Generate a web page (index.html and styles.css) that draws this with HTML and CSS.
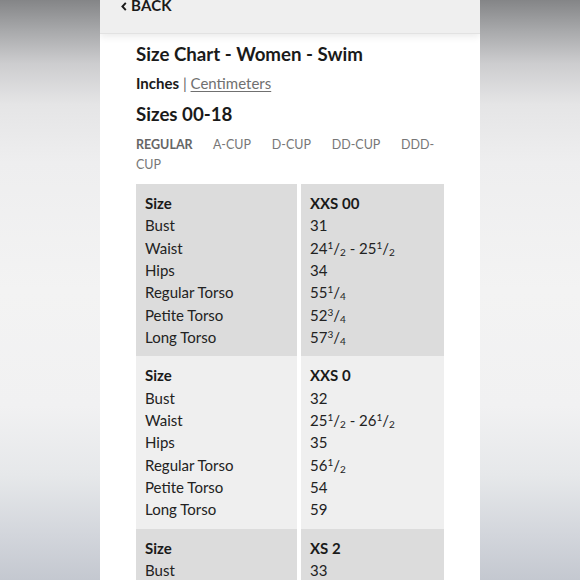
FILE: index.html
```html
<!DOCTYPE html>
<html lang="en">
<head>
<meta charset="utf-8">
<title>Size Chart - Women - Swim</title>
<link rel="stylesheet" href="styles.css">
</head>
<body>
<div class="panel">
  <header class="topbar">
    <a class="back" href="#">
      <svg class="chev" width="6" height="9" viewBox="0 0 6 9"><path d="M4.8 0.8 L1.4 4.5 L4.8 8.2" fill="none" stroke="#1a1a1a" stroke-width="1.9"/></svg>
      <span>BACK</span>
    </a>
  </header>
  <main class="content">
    <h1 class="title">Size Chart - Women - Swim</h1>
    <p class="units"><b>Inches</b> <span class="sep">|</span> <a href="#" class="cm">Centimeters</a></p>
    <h2 class="sizes">Sizes 00-18</h2>
    <p class="tabs"><span class="tab active">REGULAR</span> <span class="tab">A-CUP</span> <span class="tab">D-CUP</span> <span class="tab">DD-CUP</span> <span class="tab">DDD-CUP</span></p>
    <div class="chart">
      <div class="block dark">
        <div class="cell">
          <div class="row b">Size</div><div class="row">Bust</div><div class="row">Waist</div><div class="row">Hips</div><div class="row">Regular Torso</div><div class="row">Petite Torso</div><div class="row">Long Torso</div>
        </div>
        <div class="cell val">
          <div class="row b">XXS 00</div>
          <div class="row">31</div>
          <div class="row">24<sup>1</sup>/<sub>2</sub> - 25<sup>1</sup>/<sub>2</sub></div>
          <div class="row">34</div>
          <div class="row">55<sup>1</sup>/<sub>4</sub></div>
          <div class="row">52<sup>3</sup>/<sub>4</sub></div>
          <div class="row">57<sup>3</sup>/<sub>4</sub></div>
        </div>
      </div>
      <div class="block light">
        <div class="cell">
          <div class="row b">Size</div><div class="row">Bust</div><div class="row">Waist</div><div class="row">Hips</div><div class="row">Regular Torso</div><div class="row">Petite Torso</div><div class="row">Long Torso</div>
        </div>
        <div class="cell val">
          <div class="row b">XXS 0</div>
          <div class="row">32</div>
          <div class="row">25<sup>1</sup>/<sub>2</sub> - 26<sup>1</sup>/<sub>2</sub></div>
          <div class="row">35</div>
          <div class="row">56<sup>1</sup>/<sub>2</sub></div>
          <div class="row">54</div>
          <div class="row">59</div>
        </div>
      </div>
      <div class="block dark">
        <div class="cell">
          <div class="row b">Size</div><div class="row">Bust</div><div class="row">Waist</div><div class="row">Hips</div>
        </div>
        <div class="cell val">
          <div class="row b">XS 2</div>
          <div class="row">33</div>
          <div class="row">26<sup>1</sup>/<sub>2</sub> - 27<sup>1</sup>/<sub>2</sub></div>
          <div class="row">36</div>
        </div>
      </div>
    </div>
  </main>
</div>
</body>
</html>
```

FILE: styles.css
```css
html, body {
  margin: 0;
  padding: 0;
  height: 580px;
  overflow: hidden;
}
body {
  background: linear-gradient(to bottom, #848587 0%, #a6a7a9 5%, #cdcdcf 11%, #e5e5e6 18%, #eeeeef 28%, #f3f3f3 50%, #f1f1f2 70%, #e6e8ea 82%, #d3d6dc 92%, #c4c8d0 100%);
  display: flex;
  justify-content: center;
  font-family: Lato, "Open Sans", sans-serif;
  color: #1e1e1e;
}
.panel {
  width: 380px;
  height: 580px;
  background: #ffffff;
  overflow: hidden;
}
.topbar {
  height: 35px;
  background: #efefef;
  border-bottom: 1px solid #e2e2e2;
  box-shadow: 0 3px 7px rgba(0, 0, 0, 0.08);
  position: relative;
}
.back {
  display: flex;
  align-items: center;
  gap: 4px;
  padding-left: 21px;
  margin-top: -2px;
  font-size: 15px;
  line-height: 15px;
  font-weight: 700;
  color: #1a1a1a;
  text-decoration: none;
  letter-spacing: 0.2px;
}
.chev { display: block; margin-top: 1px; }
.content {
  padding-left: 36px;
  width: 308px;
}
.title {
  margin: 8px 0 0;
  font-size: 18.7px;
  line-height: 24px;
  font-weight: 700;
  color: #1a1a1a;
}
.units {
  margin: 6px 0 0;
  font-size: 15px;
  line-height: 22px;
  color: #1a1a1a;
}
.units b { font-weight: 700; }
.sep { color: #666; }
.cm { color: #707070; text-decoration: underline; text-underline-offset: 2px; }
.sizes {
  margin: 8px 0 0;
  font-size: 18.7px;
  line-height: 24px;
  font-weight: 700;
  color: #1a1a1a;
}
.tabs {
  margin: 9px 0 0;
  font-size: 12.5px;
  line-height: 20px;
  letter-spacing: 0;
  color: #777;
}
.tab { margin-right: 17.5px; }
.tab:last-child { margin-right: 0; }
.tab.active { font-weight: 700; color: #666; }
.chart { margin-top: 9px; }
.block {
  display: grid;
  grid-template-columns: 161px 143px;
  column-gap: 4px;
}
.cell {
  padding: 8px 0 8px 9px;
}
.dark .cell { background: #dcdcdc; }
.light .cell { background: #efefef; }
.row {
  font-size: 15px;
  line-height: 22.33px;
  color: #222;
  white-space: nowrap;
}
.row.b { font-weight: 700; color: #1a1a1a; }
sup, sub {
  font-size: 10px;
  line-height: 0;
  position: relative;
  vertical-align: baseline;
}
sup { top: -5px; }
sub { top: 2px; }
```
